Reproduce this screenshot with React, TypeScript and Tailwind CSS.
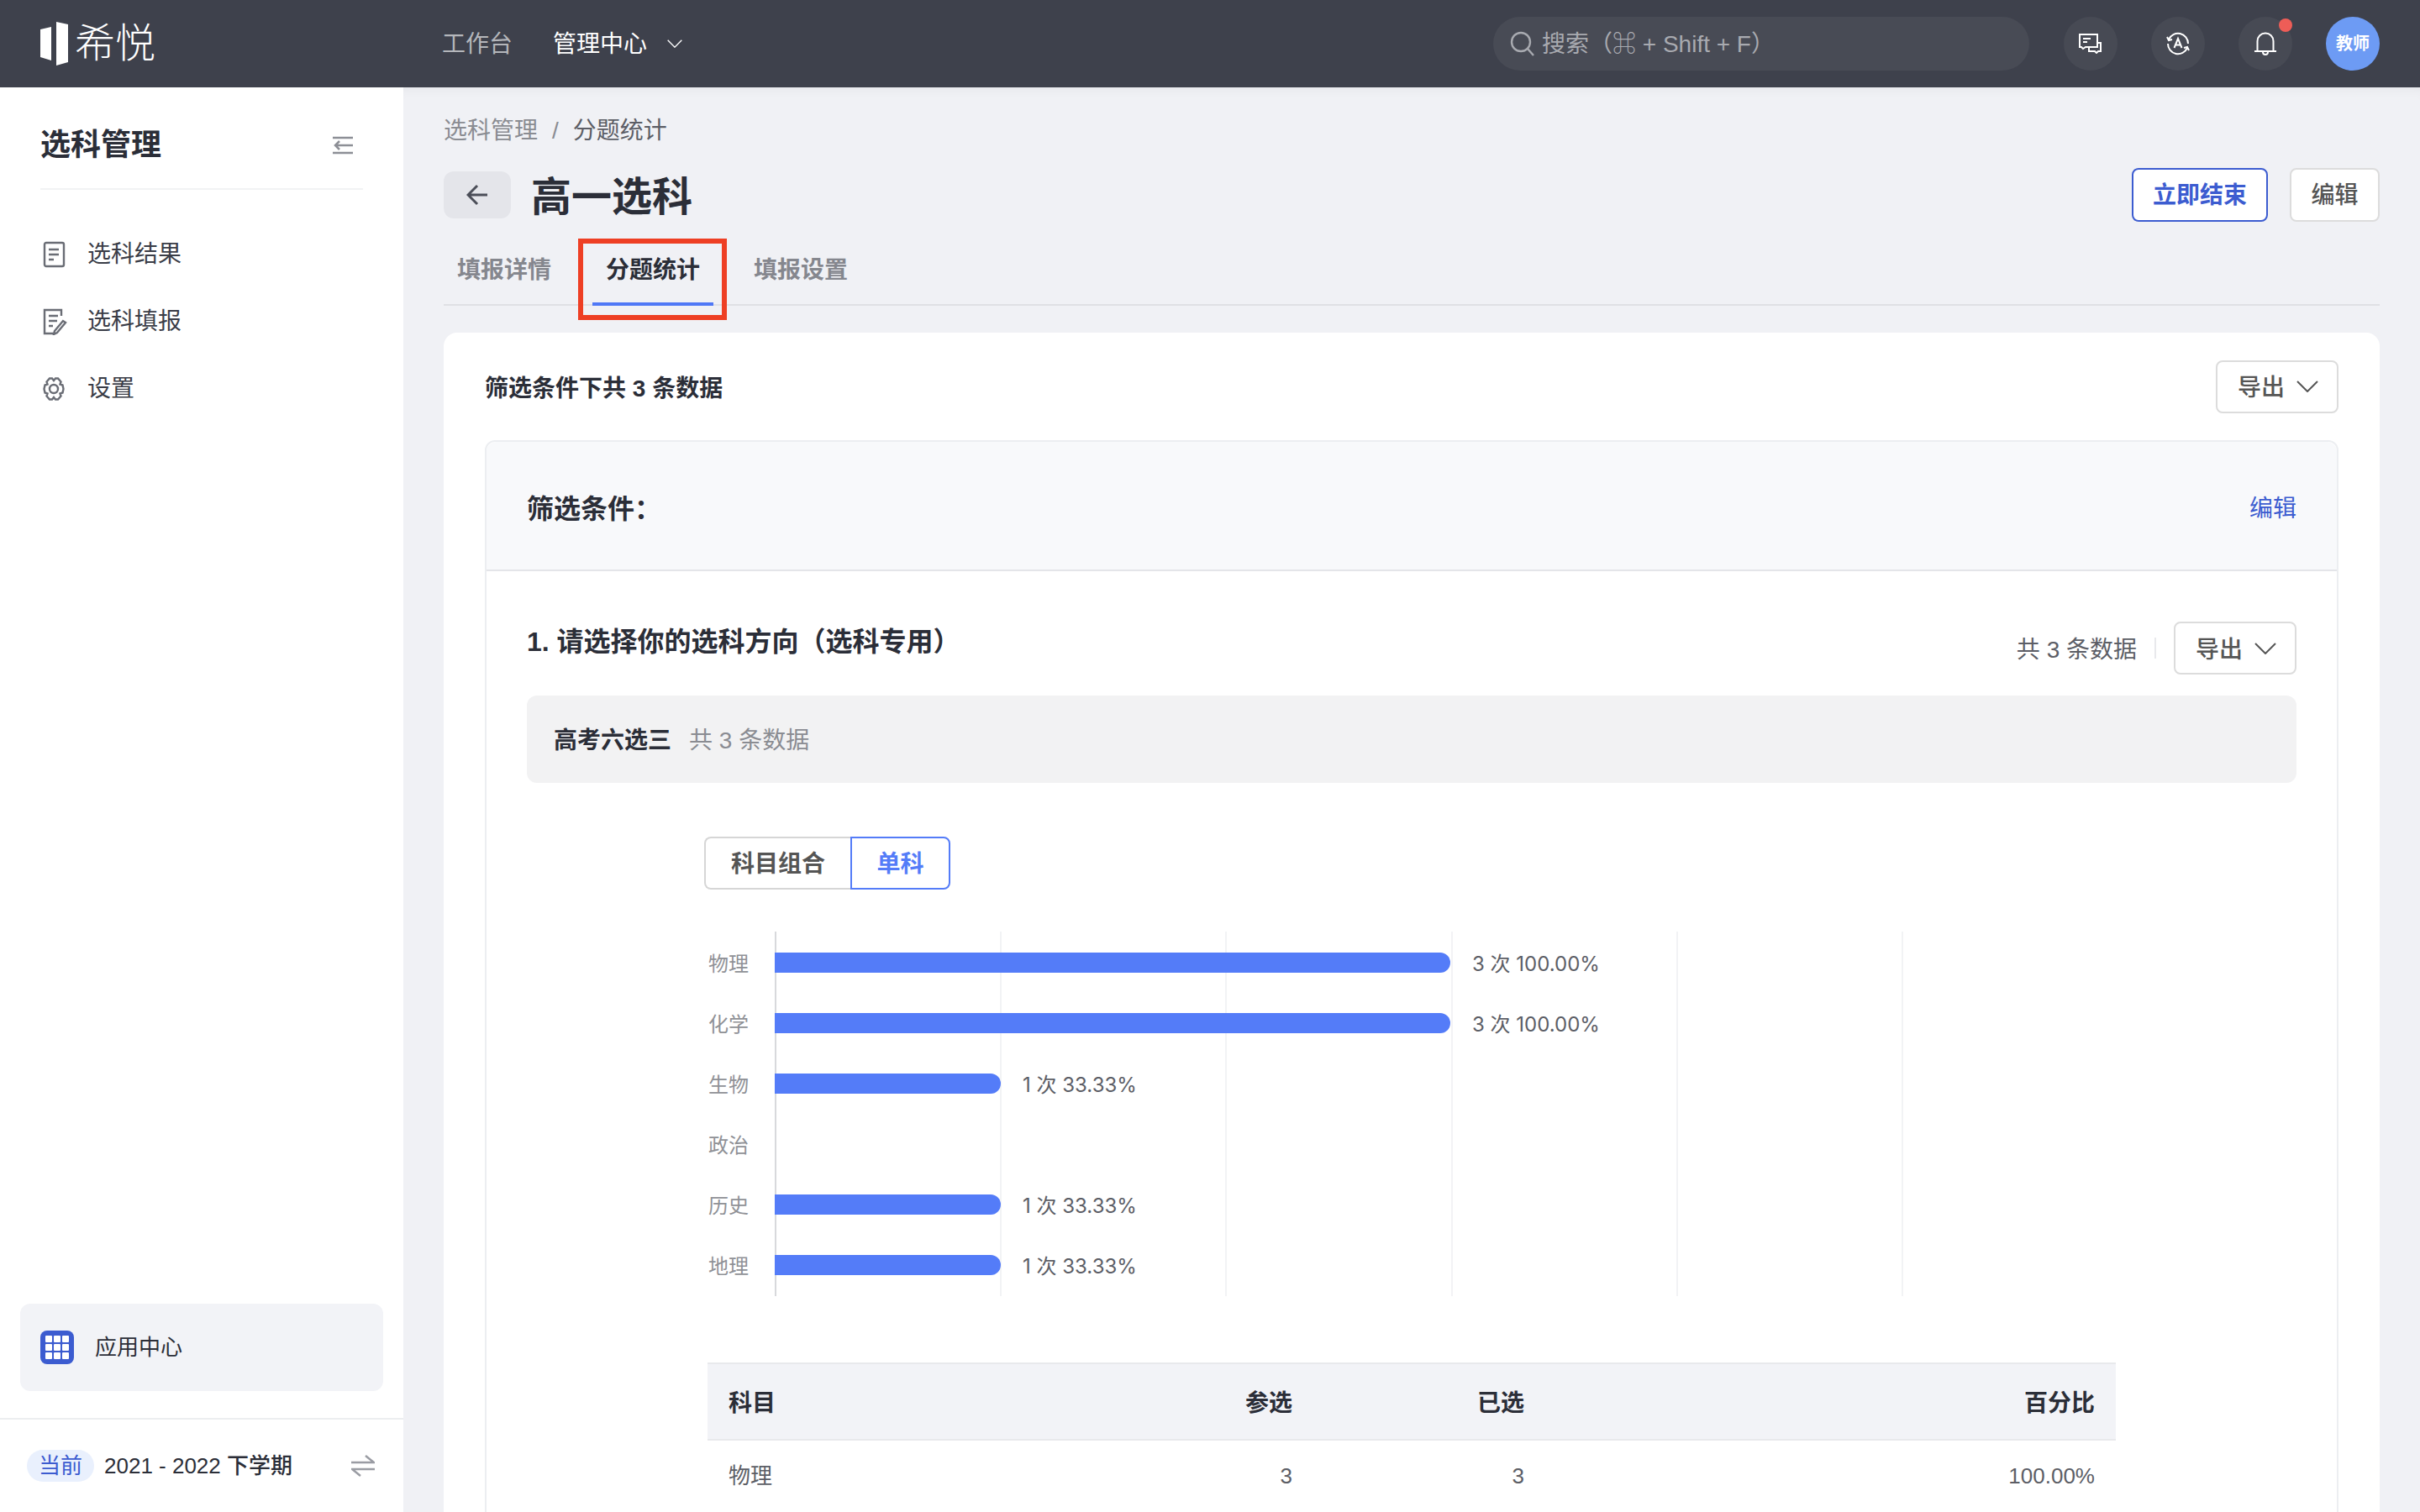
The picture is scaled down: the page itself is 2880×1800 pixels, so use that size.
import React from "react";

const font = "font-['Liberation_Sans','Noto_Sans_CJK_SC',sans-serif]";

const bars = [
	{ name: "物理", width: "w-[804px]", label: "3 次 100.00%" },
	{ name: "化学", width: "w-[804px]", label: "3 次 100.00%" },
	{ name: "生物", width: "w-[269px]", label: "1 次 33.33%" },
	{ name: "政治", width: "", label: "" },
	{ name: "历史", width: "w-[269px]", label: "1 次 33.33%" },
	{ name: "地理", width: "w-[269px]", label: "1 次 33.33%" },
];

function Chevron({ className }: { className: string }) {
	return (
		<svg viewBox="0 0 26 14" fill="none" stroke="currentColor" strokeWidth="2" className={className}>
			<path d="M1 1l12 12L25 1" />
		</svg>
	);
}

function ExportButton() {
	return (
		<button className="flex h-[63px] w-[146px] items-center rounded-[8px] border-2 border-[#dcdcdc] bg-white pl-[24px] text-[28px] leading-[40px] font-medium text-[#555]">
			<span className="pt-[4px]">导出</span>
			<Chevron className="ml-[14px] h-[14px] w-[26px] text-[#555]" />
		</button>
	);
}

function Logo() {
	return (
		<div className="flex items-center">
			<svg width="34" height="52" viewBox="0 0 34 52" fill="#fff">
				<path d="M0 9 13 6V46L0 42Z" />
				<path d="M19 0 33 3V48L19 52Z" />
			</svg>
			<span className="ml-[7px] text-[48px] leading-[52px] font-light text-white">希悦</span>
		</div>
	);
}

function TopIcon({ children }: { children: React.ReactNode }) {
	return (
		<div className="relative flex h-[64px] w-[64px] items-center justify-center rounded-full bg-[#474a54]">
			{children}
		</div>
	);
}

function TopBar() {
	return (
		<header className="relative z-10 flex h-[104px] shrink-0 items-center bg-[#3e414c] pr-[48px] pl-[48px]">
			<Logo />
			<nav className="ml-[341px] flex items-center text-[28px] leading-[40px]">
				<span className="pt-[2px] text-[#b4b6bb]">工作台</span>
				<span className="ml-[48px] pt-[2px] text-white">管理中心</span>
				<Chevron className="ml-[24px] h-[10px] w-[18px] text-white" />
			</nav>
			<div className="ml-auto flex h-[64px] w-[638px] items-center rounded-full bg-[#484b55] pl-[20px] text-[28px] leading-[40px] text-[#a8aab0]">
				<svg width="30" height="30" viewBox="0 0 30 30" fill="none" stroke="currentColor" strokeWidth="2.4">
					<circle cx="13" cy="13" r="11" />
					<path d="M21 21l7 8" />
				</svg>
				<span className="ml-[8px] pt-[2px]">搜索（⌘ + Shift + F）</span>
			</div>
			<div className="ml-[41px] flex gap-[40px]">
				<TopIcon>
					<svg width="28" height="24" viewBox="0 0 28 24" fill="none" stroke="#fff" strokeWidth="2">
						<path d="M1 1H22V16H8L5 18 3 16H1Z" />
						<path d="M5 6H14M5 10H10" />
						<path d="M22 11H26V21H23L21 23 19 21H12V16" />
					</svg>
				</TopIcon>
				<TopIcon>
					<svg width="28" height="28" viewBox="0 0 28 28" fill="none" stroke="#fff" strokeWidth="2">
						<path d="M3 9A12 12 0 0 1 26 14M25 19A12 12 0 0 1 2 14" />
						<path d="M1 6l2 4 4-1M27 22l-2-4-4 1" />
						<path d="M9.500 19 14 8 18.500 19M11 15.500H17" />
					</svg>
				</TopIcon>
				<TopIcon>
					<svg width="28" height="28" viewBox="0 0 28 28" fill="none" stroke="#fff" strokeWidth="2">
						<path d="M1 23H27M4.500 23V11A9.500 9.500 0 0 1 23.500 11V23" />
						<path d="M11 24A3 3 0 0 0 17 24" />
					</svg>
					<span className="absolute top-[2px] right-0 h-[16px] w-[16px] rounded-full bg-[#ee5d57]" />
				</TopIcon>
				<div className="flex h-[64px] w-[64px] items-center justify-center rounded-full bg-[#6d9bf4] text-[20px] font-bold text-white">
					教师
				</div>
			</div>
		</header>
	);
}

const menu = [
	{
		label: "选科结果",
		icon: (
			<>
				<rect x="5" y="2" width="23" height="28" rx="2" />
				<path d="M10 10H22M10 16H22M10 22H16" />
			</>
		),
	},
	{
		label: "选科填报",
		icon: (
			<>
				<path d="M25 9V2H5V30H17" />
				<path d="M10 9H21M10 15H20M10 21H15" />
				<path d="M20 29l10-12-3-2-10 12-1 4Z" />
			</>
		),
	},
	{
		label: "设置",
		icon: (
			<>
				<circle cx="16" cy="16" r="5" />
				<path d="M11 3.500h3l2 2.500 2-2.500h3l3.500 4-1 3 3 1 1 4.500-1 4.500-3 1 1 3-3.500 4h-3l-2-2.500-2 2.500h-3l-3.500-4 1-3-3-1-1-4.500 1-4.500 3-1-1-3Z" />
			</>
		),
	},
];

function Sidebar() {
	return (
		<aside className="flex w-[480px] shrink-0 flex-col bg-white">
			<div className="mx-[48px] border-b-2 border-[#f1f2f4] pt-[49px] pb-[31px]">
				<div className="flex items-center justify-between">
					<span className="text-[36px] leading-[40px] font-bold text-[#2b2e38]">选科管理</span>
					<svg width="28" height="22" viewBox="0 0 28 22" fill="none" stroke="#8d8f96" strokeWidth="2.500" className="mr-[10px]">
						<path d="M2 2H26M2 20H26M5 11H26M10 6l-5 5 5 5" />
					</svg>
				</div>
			</div>
			<ul className="mt-[37px] flex-1 px-[48px]">
				{menu.map((item) => (
					<li key={item.label} className="flex h-[80px] items-center text-[28px] leading-[40px] text-[#3a3d47]">
						<svg width="32" height="32" viewBox="0 0 32 32" fill="none" stroke="#6a6d75" strokeWidth="2.400">
							{item.icon}
						</svg>
						<span className="ml-[24px]">{item.label}</span>
					</li>
				))}
			</ul>
			<div className="mx-[24px] flex h-[104px] items-center rounded-[12px] bg-[#f2f3f7] pl-[24px]">
				<div className="grid h-[40px] w-[40px] grid-cols-3 gap-[2px] rounded-[8px] bg-[#3c5cd0] p-[6px]">
					{Array.from({ length: 9 }).map((_, i) => (
						<span key={i} className="rounded-[1px] bg-white" />
					))}
				</div>
				<span className="ml-[25px] text-[26px] leading-[36px] text-[#2b2e38]">应用中心</span>
			</div>
			<div className="mt-[32px] flex h-[112px] items-center border-t-2 border-[#eceef0] pr-[34px] pl-[32px]">
				<span className="flex h-[38px] w-[80px] items-center justify-center rounded-full bg-[#e9f0fd] text-[26px] text-[#3c5cd0]">
					当前
				</span>
				<span className="ml-[12px] text-[26px] leading-[36px] font-medium text-[#2b2e38]">2021 - 2022 下学期</span>
				<svg width="28" height="26" viewBox="0 0 28 26" fill="none" stroke="#9a9ca3" strokeWidth="2.500" className="ml-auto">
					<path d="M0 9H27L17 1M28 17H1L11 25" />
				</svg>
			</div>
		</aside>
	);
}

function Tabs() {
	return (
		<div className="flex h-[100px] items-start gap-[32px] border-b-2 border-[#dfe0e4] text-[28px] leading-[40px]">
			<div className="mr-[1px] h-[100px] px-[16px] pt-[38px] font-semibold text-[#85878e]">填报详情</div>
			<div className="relative h-[100px] border-b-4 border-[#4f78f6] px-[16px] pt-[38px] font-semibold text-[#2b2e38]">
				分题统计
				<div className="absolute top-[20px] right-[-16px] bottom-[-21px] left-[-17px] border-[6px] border-[#ee3f24]" />
			</div>
			<div className="h-[100px] px-[16px] pt-[38px] font-semibold text-[#85878e]">填报设置</div>
		</div>
	);
}

function Chart() {
	return (
		<div className="relative mt-[50px] ml-[216px] h-[434px]">
			<div className="absolute top-0 bottom-0 left-[79px] flex w-[1343px] border-l-2 border-[#d8d9dc]">
				{[0, 1, 2, 3, 4].map((i) => (
					<div key={i} className="flex-1 border-r-2 border-[#f2f3f5]" />
				))}
			</div>
			<div className="relative pt-[1px]">
				{bars.map((bar) => (
					<div key={bar.name} className="flex h-[72px] items-center">
						<span className="w-[79px] pt-[4px] text-[24px] leading-[32px] text-[#8f9196]">{bar.name}</span>
						{bar.width && <div className={`h-[24px] rounded-r-full bg-[#547cf8] ${bar.width}`} />}
						{bar.label && (
							<span className="ml-[26px] pt-[4px] font-['Inter','Noto_Sans_CJK_SC',sans-serif] text-[24px] leading-[32px] text-[#5c5e66]">
								{bar.label}
							</span>
						)}
					</div>
				))}
			</div>
		</div>
	);
}

function SubjectTable() {
	return (
		<table className="mt-[79px] ml-[215px] w-[1676px] table-fixed border-collapse text-[26px] leading-[36px]">
			<thead>
				<tr className="h-[91px] border-y-2 border-[#e8e9ec] bg-[#f2f3f7] text-[28px] text-[#2b2e38]">
					<th className="w-[421px] pt-[4px] pl-[25px] text-left font-semibold">科目</th>
					<th className="w-[300px] pt-[4px] pr-[25px] text-right font-semibold">参选</th>
					<th className="w-[275px] pt-[4px] pr-[24px] text-right font-semibold">已选</th>
					<th className="pt-[4px] pr-[25px] text-right font-semibold">百分比</th>
				</tr>
			</thead>
			<tbody>
				<tr className="h-[88px] text-[#5c5e66]">
					<td className="pb-[4px] pl-[25px]">物理</td>
					<td className="pr-[25px] pb-[4px] text-right">3</td>
					<td className="pr-[24px] pb-[4px] text-right">3</td>
					<td className="pr-[25px] pb-[4px] text-right">100.00%</td>
				</tr>
			</tbody>
		</table>
	);
}

export default function App() {
	return (
		<div className={`flex h-screen flex-col overflow-hidden bg-[#f0f1f5] ${font}`}>
			<TopBar />
			<div className="flex min-h-0 flex-1">
				<Sidebar />
				<main className="min-w-0 flex-1 px-[48px] pt-[32px] shadow-[inset_0_12px_16px_-12px_rgba(0,0,0,0.06)]">
					<div className="flex h-[40px] items-center text-[28px] leading-[40px]">
						<span className="text-[#8a8c92]">选科管理</span>
						<span className="mx-[17px] text-[#8a8c92]">/</span>
						<span className="text-[#5c5e66]">分题统计</span>
					</div>
					<div className="mt-[24px] flex h-[64px] items-center">
						<button className="flex h-[56px] w-[80px] items-center justify-center rounded-[12px] bg-[#e4e5ea]">
							<svg width="26" height="26" viewBox="0 0 26 26" fill="none" stroke="#4b4e58" strokeWidth="3">
								<path d="M25 13H3M13 2 2 13l11 11" />
							</svg>
						</button>
						<h1 className="ml-[24px] pt-[6px] text-[48px] leading-[64px] font-bold text-[#2b2e38]">高一选科</h1>
						<button className="ml-auto h-[64px] w-[162px] rounded-[8px] border-2 border-[#3c5cd0] bg-white pt-[2px] text-[28px] font-semibold text-[#3c5cd0]">
							立即结束
						</button>
						<button className="ml-[26px] h-[64px] w-[107px] rounded-[8px] border-2 border-[#dcdcdc] bg-white pt-[2px] text-[28px] font-medium text-[#555]">
							编辑
						</button>
					</div>
					<Tabs />
					<section className="mt-[32px] rounded-t-[16px] bg-white px-[49px]">
						<div className="flex h-[128px] items-center justify-between">
							<span className="pt-[6px] text-[28px] leading-[40px] font-semibold text-[#2b2e38]">筛选条件下共 3 条数据</span>
							<ExportButton />
						</div>
						<div className="rounded-t-[12px] border-2 border-[#eceef1]">
							<div className="flex h-[154px] items-center justify-between rounded-t-[12px] border-b-2 border-[#e4e5e9] bg-[#f8f9fb] px-[48px] pt-[8px]">
								<span className="text-[32px] leading-[44px] font-semibold text-[#2b2e38]">筛选条件：</span>
								<span className="text-[28px] leading-[40px] text-[#3c5cd0]">编辑</span>
							</div>
							<div className="px-[48px] pt-[60px]">
								<div className="flex h-[63px] items-start justify-between">
									<span className="pt-[2px] text-[32px] leading-[44px] font-semibold text-[#2b2e38]">1. 请选择你的选科方向（选科专用）</span>
									<div className="flex items-center">
										<span className="pt-[4px] text-[28px] leading-[40px] text-[#5c5e66]">共 3 条数据</span>
										<span className="mx-[21px] h-[25px] w-[2px] bg-[#e8e9ec]" />
										<ExportButton />
									</div>
								</div>
								<div className="mt-[25px] flex h-[104px] items-center rounded-[12px] bg-[#f2f2f3] pt-[4px] pl-[32px] text-[28px] leading-[40px]">
									<span className="font-semibold text-[#2b2e38]">高考六选三</span>
									<span className="ml-[21px] text-[#8a8c92]">共 3 条数据</span>
								</div>
								<div className="mt-[64px] ml-[211px] flex h-[63px] text-[28px] font-semibold">
									<button className="w-[174px] rounded-l-[8px] border-2 border-r-0 border-[#d6d6d6] pt-[3px] text-[#555]">科目组合</button>
									<button className="w-[119px] rounded-r-[8px] border-2 border-[#547cf8] pt-[3px] text-[#547cf8]">单科</button>
								</div>
								<Chart />
								<SubjectTable />
							</div>
						</div>
					</section>
				</main>
			</div>
		</div>
	);
}
